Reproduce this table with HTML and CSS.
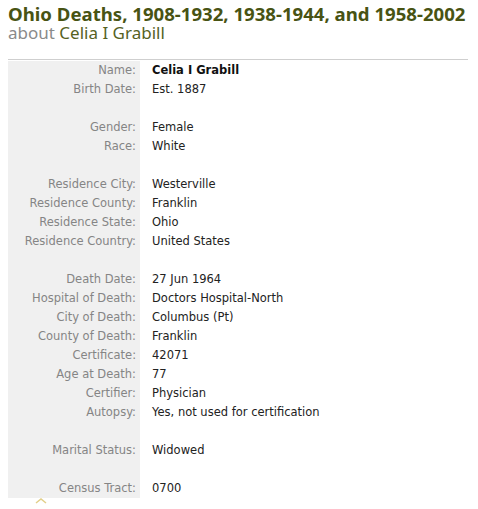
FILE: index.html
```html
<!DOCTYPE html>
<html>
<head>
<meta charset="utf-8">
<link rel="stylesheet" href="styles.css">
</head>
<body>
<div class="page">
  <h1 class="title">Ohio Deaths, 1908-1932, 1938-1944, and 1958-2002</h1>
  <div class="subtitle"><span class="about">about</span> <span class="who">Celia I Grabill</span></div>
  <div class="record">
    <div class="row"><div class="lbl">Name:</div><div class="val bold">Celia I Grabill</div></div>
    <div class="row"><div class="lbl">Birth Date:</div><div class="val">Est. 1887</div></div>
    <div class="row"><div class="lbl"></div><div class="val"></div></div>
    <div class="row"><div class="lbl">Gender:</div><div class="val">Female</div></div>
    <div class="row"><div class="lbl">Race:</div><div class="val">White</div></div>
    <div class="row"><div class="lbl"></div><div class="val"></div></div>
    <div class="row"><div class="lbl">Residence City:</div><div class="val">Westerville</div></div>
    <div class="row"><div class="lbl">Residence County:</div><div class="val">Franklin</div></div>
    <div class="row"><div class="lbl">Residence State:</div><div class="val">Ohio</div></div>
    <div class="row"><div class="lbl">Residence Country:</div><div class="val">United States</div></div>
    <div class="row"><div class="lbl"></div><div class="val"></div></div>
    <div class="row"><div class="lbl">Death Date:</div><div class="val">27 Jun 1964</div></div>
    <div class="row"><div class="lbl">Hospital of Death:</div><div class="val">Doctors Hospital-North</div></div>
    <div class="row"><div class="lbl">City of Death:</div><div class="val">Columbus (Pt)</div></div>
    <div class="row"><div class="lbl">County of Death:</div><div class="val">Franklin</div></div>
    <div class="row"><div class="lbl">Certificate:</div><div class="val">42071</div></div>
    <div class="row"><div class="lbl">Age at Death:</div><div class="val">77</div></div>
    <div class="row"><div class="lbl">Certifier:</div><div class="val">Physician</div></div>
    <div class="row"><div class="lbl">Autopsy:</div><div class="val">Yes, not used for certification</div></div>
    <div class="row"><div class="lbl"></div><div class="val"></div></div>
    <div class="row"><div class="lbl">Marital Status:</div><div class="val">Widowed</div></div>
    <div class="row"><div class="lbl"></div><div class="val"></div></div>
    <div class="row"><div class="lbl">Census Tract:</div><div class="val">0700</div></div>
  </div>
  <div class="more">
    <svg width="12" height="6" viewBox="0 0 12 6"><polyline points="1,5 6,1 11,5" fill="none" stroke="#e2cf8a" stroke-width="1.5"/></svg>
  </div>
</div>
</body>
</html>
```

FILE: styles.css
```css
html, body {
  margin: 0;
  padding: 0;
  background: #fff;
}
.page {
  padding: 3px 0 0 8px;
  width: 460px;
  font-family: "DejaVu Sans", Verdana, sans-serif;
}
.title {
  margin: 0;
  font-family: "Noto Sans", "Open Sans", sans-serif;
  font-size: 18.6px;
  font-weight: bold;
  line-height: 21px;
  color: #485313;
}
.subtitle {
  font-family: "Noto Sans", "Open Sans", sans-serif;
  font-size: 17px;
  line-height: 18px;
  color: #8a8a8a;
}
.subtitle .who {
  color: #56621f;
}
.record {
  margin-top: 17px;
  border-top: 1px solid #cfcfcf;
  padding-top: 1px;
  font-size: 11.5px;
}
.row {
  display: grid;
  grid-template-columns: 132px 1fr;
  height: 19px;
  line-height: 19px;
}
.lbl {
  background: #f0f0f0;
  color: #858585;
  text-align: right;
  padding-right: 4px;
  white-space: nowrap;
}
.val {
  color: #222;
  padding-left: 12px;
  white-space: nowrap;
}
.bold {
  font-weight: bold;
  color: #111;
}
.more {
  padding-left: 27px;
  height: 10px;
  line-height: 0;
}
```
